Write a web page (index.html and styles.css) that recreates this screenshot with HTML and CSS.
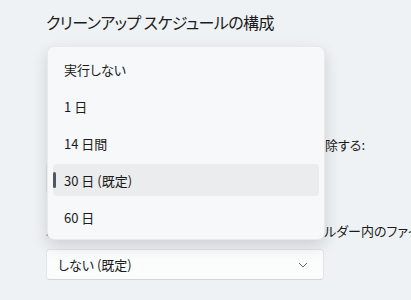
FILE: index.html
```html
<!DOCTYPE html>
<html lang="ja">

<head>
    <meta charset="UTF-8">
    <title>ストレージ センサー</title>
    <link rel="stylesheet" href="styles.css">
</head>

<body>
    <div class="pagina">
        <h1 class="titulo">クリーンアップ スケジュールの構成</h1>

        <div class="ajuste primero">
            <div class="etiqueta fin">
                <span>ごみ箱に移動してから次の期間が過ぎたファイルを削除する:</span>
            </div>
            <div class="combo">
                <span>30 日 (既定)</span>
                <svg class="chevron" width="10" height="6" viewBox="0 0 10 6"><path d="M1 1 L5 5 L9 1" fill="none" stroke="#6b6b6b" stroke-width="1"/></svg>
            </div>
        </div>

        <div class="ajuste">
            <div class="etiqueta">次の期間に開かれなかった場合、ダウンロード フォルダー内のファイルを削除する:</div>
            <div class="combo">
                <span>しない (既定)</span>
                <svg class="chevron" width="10" height="6" viewBox="0 0 10 6"><path d="M1 1 L5 5 L9 1" fill="none" stroke="#6b6b6b" stroke-width="1"/></svg>
            </div>
        </div>
    </div>

    <div class="menu">
        <div class="opcion">実行しない</div>
        <div class="opcion">1 日</div>
        <div class="opcion">14 日間</div>
        <div class="opcion activa">30 日 (既定)</div>
        <div class="opcion">60 日</div>
    </div>
</body>

</html>
```

FILE: styles.css
```css
body {
    margin: 0;
    font-family: "Noto Sans CJK JP", "Noto Sans", sans-serif;
    font-feature-settings: "palt";
    background-color: #eff2f5;
    color: #1b1b1b;
    height: 300px;
    overflow: hidden;
    position: relative;
}

.pagina {
    padding: 11px 0 0 46px;
}

.titulo {
    margin: 0;
    font-size: 16px;
    font-weight: normal;
    line-height: 22px;
    letter-spacing: -0.6px;
}

.ajuste {
    display: flex;
    flex-direction: column;
    gap: 8px;
}

.ajuste.primero {
    margin-top: 102px;
    margin-bottom: 27px;
}

.etiqueta {
    font-size: 13px;
    line-height: 20px;
    white-space: nowrap;
}

.etiqueta.fin {
    display: flex;
    justify-content: flex-end;
    width: 318px;
    margin-left: 1px;
    overflow: hidden;
}

.combo {
    width: 278px;
    height: 31px;
    box-sizing: border-box;
    padding: 0 15px 0 11px;
    display: flex;
    align-items: center;
    justify-content: space-between;
    background-color: #fbfcfc;
    border: 1px solid #e2e4e6;
    border-bottom-color: #d3d5d7;
    border-radius: 4px;
    font-size: 13px;
}

.menu {
    position: absolute;
    top: 46px;
    left: 47px;
    width: 278px;
    box-sizing: border-box;
    padding: 6px 5px;
    display: flex;
    flex-direction: column;
    gap: 5px;
    background-color: #f6f8f9;
    border: 1px solid rgba(0, 0, 0, 0.06);
    border-radius: 7px;
    box-shadow: 0 6px 16px rgba(0, 0, 0, 0.14);
}

.opcion {
    height: 32px;
    display: flex;
    align-items: center;
    padding-left: 11px;
    border-radius: 4px;
    font-size: 13px;
    position: relative;
}

.opcion.activa {
    background-color: #eaecee;
}

.opcion.activa::before {
    content: "";
    position: absolute;
    left: 0;
    top: 8px;
    width: 3px;
    height: 16px;
    border-radius: 2px;
    background-color: #4b5966;
}
```
